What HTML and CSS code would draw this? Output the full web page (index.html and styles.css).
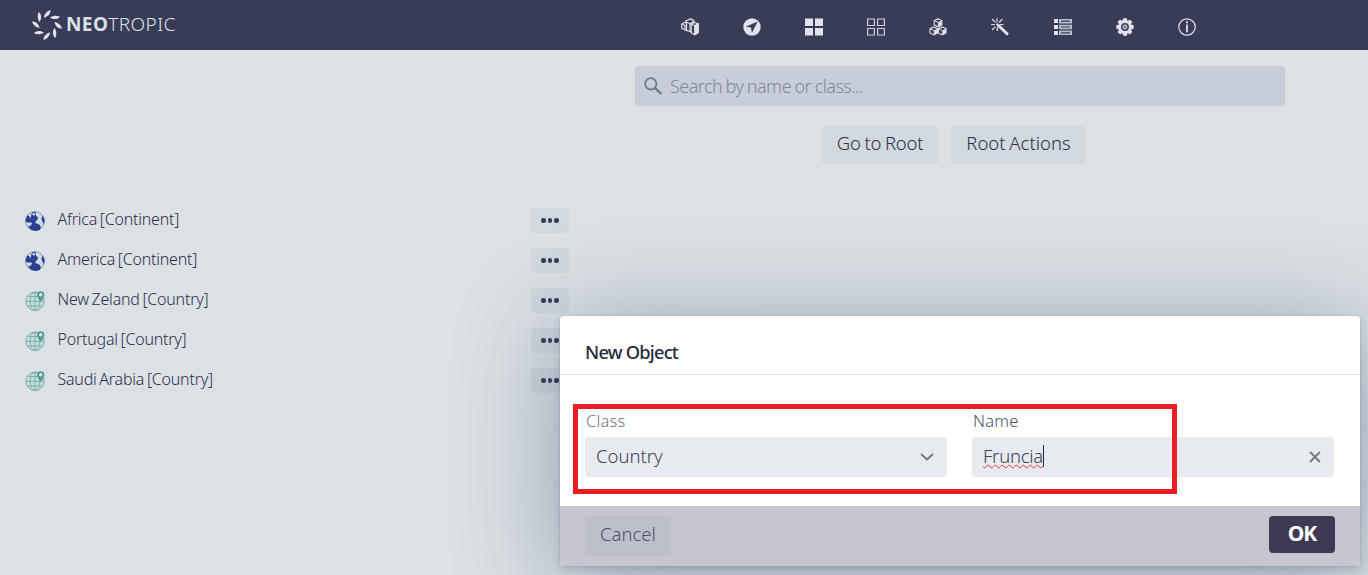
FILE: index.html
```html
<!DOCTYPE html>
<html lang="en">
<head>
<meta charset="utf-8">
<title>Neotropic</title>
<link rel="stylesheet" href="styles.css">
</head>
<body>
<svg class="defs" width="0" height="0" aria-hidden="true">
  <defs>
    <symbol id="continent" viewBox="0 0 20 20">
      <circle cx="10" cy="10" r="9.4" fill="#d3dae4" stroke="#8795b9" stroke-width="1"/>
      <path d="M2.500 4.500.800 8l-.3 2.500 2.500 1.200 2.600-.5 1.500 1-1.100 2.300-3 1 3 3.200 4.400 1.200 4.500-.9 1-2.500-1-2.500-2.700-1.500-1.300.3-.6-2 1.600-1.500 1.300-2.500L11 4.500l-.5-3.700-3.500.7-1 3.500-.5 2.500L4 5z" fill="#2c4096"/>
      <path d="m17.500 5 1.300 1.500.8 3.500-1 3-1.300-2.500-.8-3z" fill="#2c4096"/>
      <circle cx="8.800" cy="3.200" r="1.300" fill="#d3dae4"/>
    </symbol>
    <symbol id="country" viewBox="0 0 20 20">
      <g fill="none" stroke="#79afac" stroke-width="1">
        <circle cx="10" cy="10.300" r="9.200" fill="#cadbdc"/>
        <ellipse cx="10" cy="10.300" rx="4.800" ry="9.200"/>
        <path d="M10 1v18.500M1 10.300h18M2.500 5.500h15M2.500 15h15"/>
      </g>
      <path d="M15.700 10.800C13.600 7.500 12 5.800 12 3.900a3.700 3.700 0 0 1 7.400 0c0 1.900-1.600 3.600-3.700 6.900z" fill="#4f9c98"/>
      <circle cx="15.700" cy="3.700" r="1.700" fill="#dce2e5"/>
    </symbol>
  </defs>
</svg>
<header class="topbar">
  <div class="brand">
    <svg class="brand-mark" viewBox="-15 -15 30 30" fill="#e0e4ea">
      <path id="petal" d="M3.400-15C3.800-11.500 .8-8-3.100-7.500-2.800-10.500-.2-14 3.400-15z"/>
      <use href="#petal" transform="rotate(45)"/><use href="#petal" transform="rotate(90)"/>
      <use href="#petal" transform="rotate(135)"/><use href="#petal" transform="rotate(180)"/>
      <use href="#petal" transform="rotate(225)"/><use href="#petal" transform="rotate(270)"/>
      <use href="#petal" transform="rotate(315)"/>
    </svg>
    <span class="brand-name"><b>NEO</b><span>TROPIC</span></span>
  </div>
  <nav class="menu">
    <svg viewBox="0 0 18 18"><g fill="#393c57" stroke="#dfe4ea" stroke-width="1.200" stroke-linejoin="round"><path d="M.8 6 4 4.200 6 5.500v7.300L.8 10.500z"/><path d="M.8 6 4 7.500v4M4.800 3 9.500.9l3.300 1.500v4L10 14l-4.500-1.800V4.500z"/><path d="m5.500 4.200 3.800 1.600 3.500-2.600M9 6v7.500"/><path d="M10.200 6.300 13.500 4.500l3.700 1.200v8.800l-3.500 2.200-3.500-2z"/><path d="m13.700 7.500 3.500-1.800v8.800l-3.500 2.200z" fill="#dfe4ea"/><path d="m10.200 6.300 3.500 1.200"/></g></svg>
    <svg viewBox="0 0 18 18"><circle cx="9" cy="9" r="8.700" fill="#dfe4ea"/><path d="M14.700 3.500 2.800 8.800l5.200.8.900 5.300z" fill="#393c57"/></svg>
    <svg viewBox="0 0 18 18"><path d="M0 .5h8V8H0zM10 .5h8V8h-8zM0 10h8v7.500H0zM10 10h8v7.500h-8z" fill="#dfe4ea"/></svg>
    <svg viewBox="0 0 18 18"><path d="M.6 1h6.800v6.500H.6zM10.600 1h6.800v6.500h-6.800zM.6 10.500h6.800V17H.6zM10.600 10.500h6.800V17h-6.800z" fill="none" stroke="#c9ced9" stroke-width="1.200"/></svg>
    <svg viewBox="0 0 18 18"><g id="cube"><path d="m9 .7 3.800 1.800v4.300L9 8.800 5.200 6.800V2.500z" fill="#393c57" stroke="#dfe4ea" stroke-width="1.100"/><path d="m9 4.200 3.800-1.700v4.300L9 8.800z" fill="#dfe4ea"/><path d="M5.200 2.500 9 4.200" stroke="#dfe4ea"/></g><use href="#cube" x="-4.200" y="8.200"/><use href="#cube" x="4.200" y="8.200"/></svg>
    <svg viewBox="0 0 18 18" fill="none" stroke="#dfe4ea" stroke-linecap="round"><path d="m7.500 7.500 8.500 8.300" stroke-width="3"/><path d="m6.200 6.200 3.300 3.300" stroke-width="2"/><path d="M6 .6v3M1.500 1.500l2.600 2.600M.6 6.500h3M1.500 11.500l2.600-2.600M6.300 9.500v3M11 1.500 8.500 4M9.500 6.500h2.500" stroke-width="1.200"/></svg>
    <svg viewBox="0 0 18 18"><path d="M0 1h4v4H0zM0 7h4v4H0zM0 13h4v4H0z" fill="#dfe4ea"/><path d="M5 1h13v4.500H5zM5 6.700h13v4.500H5zM5 12.500h13V17H5z" fill="#b6bdca"/><path d="M7 3.200h9M7 9h9M7 14.800h9" stroke="#393c57" stroke-width="1.200"/></svg>
    <svg viewBox="0 0 18 18"><g fill="#dfe4ea"><path id="tooth" d="M7.200.3h3.600l.7 3.700h-5z"/><use href="#tooth" transform="rotate(45 9 9)"/><use href="#tooth" transform="rotate(90 9 9)"/><use href="#tooth" transform="rotate(135 9 9)"/><use href="#tooth" transform="rotate(180 9 9)"/><use href="#tooth" transform="rotate(225 9 9)"/><use href="#tooth" transform="rotate(270 9 9)"/><use href="#tooth" transform="rotate(315 9 9)"/><circle cx="9" cy="9" r="6.900"/></g><circle cx="9" cy="9" r="3.200" fill="#dfe4ea" stroke="#393c57" stroke-width="1.500"/><circle cx="9" cy="9" r="1.800" fill="#7e8397"/></svg>
    <svg viewBox="0 0 18 18"><circle cx="9" cy="9" r="8.200" fill="none" stroke="#dfe4ea" stroke-width="1.200"/><path d="M8 3.300h2v2H8zM8 6.500h2v7.800H8z" fill="#c9ced9"/></svg>
  </nav>
</header>
<main class="page">
  <div class="tools">
    <div class="search">
      <svg width="18" height="18" viewBox="0 0 18 18" fill="none" stroke="#6d7888"><circle cx="6.800" cy="6.800" r="5.700" stroke-width="1.800"/><path d="m11 11 6.300 6" stroke-width="2.400"/></svg>
      <span class="t-search">Search by name or class...</span>
    </div>
    <div class="actions">
      <button class="btn go"><span>Go to Root</span></button>
      <button class="btn root"><span>Root Actions</span></button>
    </div>
  </div>
  <ul class="tree">
    <li><svg class="globe"><use href="#continent"/></svg><span class="label">Africa [Continent]</span><button class="more"><i></i><i></i><i></i></button></li>
    <li><svg class="globe"><use href="#continent"/></svg><span class="label">America [Continent]</span><button class="more"><i></i><i></i><i></i></button></li>
    <li><svg class="globe"><use href="#country"/></svg><span class="label">New Zeland [Country]</span><button class="more"><i></i><i></i><i></i></button></li>
    <li><svg class="globe"><use href="#country"/></svg><span class="label">Portugal [Country]</span><button class="more"><i></i><i></i><i></i></button></li>
    <li><svg class="globe"><use href="#country"/></svg><span class="label">Saudi Arabia [Country]</span><button class="more"><i></i><i></i><i></i></button></li>
  </ul>
</main>
<section class="dialog">
  <h2 class="dialog-title"><span>New Object</span></h2>
  <div class="form">
    <div class="field">
      <span class="caption muted">Class</span>
      <div class="input"><span class="value">Country</span><svg width="14" height="8" viewBox="0 0 14 8" fill="none" stroke="#6e7a87" stroke-width="1.900"><path d="m1 1 6 5.500L13 1"/></svg></div>
    </div>
    <div class="field">
      <span class="caption">Name</span>
      <div class="input"><span class="value typed">Fruncia</span><svg width="12" height="12" viewBox="0 0 12 12" fill="none" stroke="#6e7a87" stroke-width="1.800"><path d="m1 1 10 10M11 1 1 11"/></svg></div>
    </div>
  </div>
  <footer class="dialog-foot">
    <button class="cancel"><span>Cancel</span></button>
    <button class="ok"><span>OK</span></button>
  </footer>
  <div class="highlight"></div>
</section>
</body>
</html>
```
FILE: styles.css
```css
* { box-sizing: border-box; }
body {
  margin: 0;
  height: 575px;
  position: relative;
  overflow: hidden;
  background: #dce1e5;
  color: #2b2f4b;
  font-family: "Noto Sans", "Open Sans", sans-serif;
  font-weight: 350;
}
button { border: 0; padding: 0; margin: 0; font: inherit; color: inherit; }
svg { display: block; flex: none; }
.defs { position: absolute; }
.topbar { height: 50px; background: #393c57; display: flex; align-items: center; }
.brand { width: 680.500px; padding-left: 32px; display: flex; align-items: center; gap: 4px; }
.brand-mark { width: 30px; height: 30px; }
.brand-name { font: 300 19px/24px "Noto Sans", sans-serif; color: #dce1e8; letter-spacing: .4px; padding-bottom: 2px; }
.brand-name b { font-weight: 700; }
.menu { display: flex; gap: 44.200px; padding-top: 3px; }
.menu svg { width: 18px; height: 18px; }
.tools { height: 150px; padding: 16px 0 0 635px; }
.search {
  width: 650px; height: 40px; padding: 0 9px; border-radius: 4px;
  background: #c8ced9; color: #7f8898;
  display: flex; align-items: center; gap: 8px; font-size: 18px;
}
.t-search { letter-spacing: -.56px; word-spacing: -.600px; }
.actions { display: flex; gap: 13px; padding: 20px 0 0 187px; }
.btn { height: 38px; border-radius: 4px; background: #d1d8de; font-size: 18.500px; line-height: 34px; padding-bottom: 4px; }
.go { width: 116px; letter-spacing: -.25px; word-spacing: -.700px; }
.root { width: 135px; word-spacing: -1px; }
.tree { list-style: none; margin: 0; padding: 0 0 0 25px; width: 569px; }
.tree li { height: 41px; margin-bottom: -1px; display: flex; align-items: center; gap: 12.500px; }
.globe { width: 20px; height: 20px; }
.label { flex: 1; font-size: 16px; line-height: 20px; padding-bottom: 4px; letter-spacing: -.22px; word-spacing: -1.200px; }
.more { width: 38px; height: 25px; border-radius: 4px; background: #d1d8de; display: flex; align-items: center; justify-content: center; gap: 2px; }
.more i { width: 4.600px; height: 4.600px; border-radius: 50%; background: #353a59; }
.dialog {
  position: absolute; left: 560px; top: 316px; width: 800px; height: 250px;
  background: #fff; border-radius: 4px;
  box-shadow: 0 0 0 1px rgba(40,60,85,.06), 0 3px 6px rgba(40,60,85,.15), 0 14px 100px 2px rgba(40,65,95,.42);
}
.dialog-title {
  margin: 0; height: 59px; padding: 24px 25px 0; border-bottom: 1px solid #e6e8eb;
  font-size: 18.300px; line-height: 24px; font-weight: 500; letter-spacing: -.78px; color: #232b3e;
}
.form { height: 131px; padding: 36px 26px 0 25px; display: flex; gap: 25px; }
.field { width: 362px; }
.caption { display: block; height: 26px; padding-left: 1px; font-size: 16.500px; line-height: 20px; letter-spacing: .2px; color: #4c5166; }
.muted { color: #71757f; }
.input {
  height: 40px; border-radius: 4px; background: #e7eaef; padding: 0 13px 0 11px;
  display: flex; align-items: center; justify-content: space-between;
  font-size: 18.500px; color: #3b4256;
}
.value { line-height: 22px; margin-bottom: 2px; }
.typed { border-right: 1px solid #20263a; letter-spacing: -.25px; text-decoration: underline wavy #e03440 1px; text-underline-offset: 1px; }
.dialog-foot {
  height: 60px; padding: 10px 25px; background: #c6c6cf; border-radius: 0 0 4px 4px;
  display: flex; justify-content: space-between; align-items: flex-start;
}
.cancel { width: 86px; height: 40px; border-radius: 4px; background: #bcbfca; color: #4e5169; font-size: 18.500px; padding-bottom: 5px; }
.ok { width: 66px; height: 37px; border-radius: 4px; background: #3f3a54; color: #fff; font-size: 21px; font-weight: 700; letter-spacing: -1px; padding-bottom: 3px; }
.highlight { position: absolute; left: 13px; top: 88px; width: 604px; height: 90px; border: 5px solid #e91d25; }
```
